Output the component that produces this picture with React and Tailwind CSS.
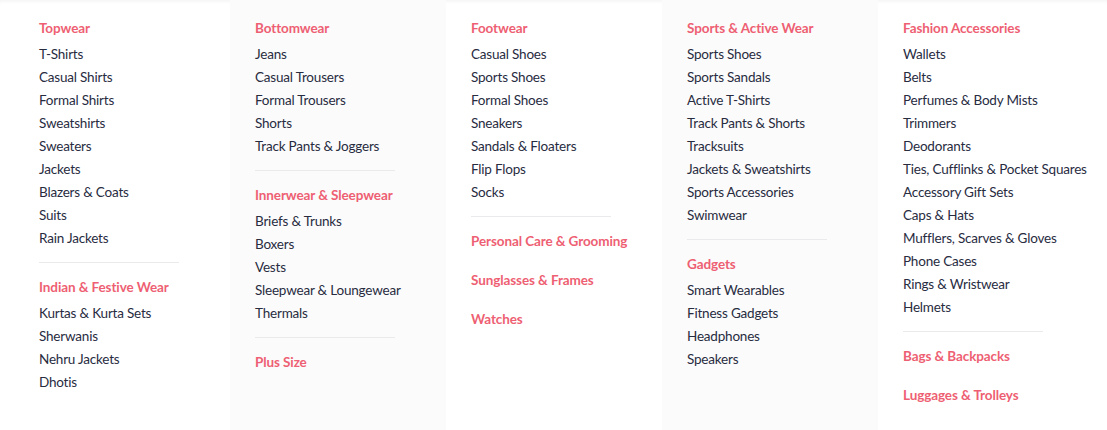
import React from 'react';

const columns = [
    [
        { title: 'Topwear', items: ['T-Shirts', 'Casual Shirts', 'Formal Shirts', 'Sweatshirts', 'Sweaters', 'Jackets', 'Blazers & Coats', 'Suits', 'Rain Jackets'] },
        { title: 'Indian & Festive Wear', items: ['Kurtas & Kurta Sets', 'Sherwanis', 'Nehru Jackets', 'Dhotis'] },
    ],
    [
        { title: 'Bottomwear', items: ['Jeans', 'Casual Trousers', 'Formal Trousers', 'Shorts', 'Track Pants & Joggers'] },
        { title: 'Innerwear & Sleepwear', items: ['Briefs & Trunks', 'Boxers', 'Vests', 'Sleepwear & Loungewear', 'Thermals'] },
        { title: 'Plus Size', items: [] },
    ],
    [
        { title: 'Footwear', items: ['Casual Shoes', 'Sports Shoes', 'Formal Shoes', 'Sneakers', 'Sandals & Floaters', 'Flip Flops', 'Socks'] },
        { title: 'Personal Care & Grooming', items: [], noDivider: true },
        { title: 'Sunglasses & Frames', items: [], noDivider: true },
        { title: 'Watches', items: [] },
    ],
    [
        { title: 'Sports & Active Wear', items: ['Sports Shoes', 'Sports Sandals', 'Active T-Shirts', 'Track Pants & Shorts', 'Tracksuits', 'Jackets & Sweatshirts', 'Sports Accessories', 'Swimwear'] },
        { title: 'Gadgets', items: ['Smart Wearables', 'Fitness Gadgets', 'Headphones', 'Speakers'] },
    ],
    [
        { title: 'Fashion Accessories', items: ['Wallets', 'Belts', 'Perfumes & Body Mists', 'Trimmers', 'Deodorants', 'Ties, Cufflinks & Pocket Squares', 'Accessory Gift Sets', 'Caps & Hats', 'Mufflers, Scarves & Gloves', 'Phone Cases', 'Rings & Wristwear', 'Helmets'] },
        { title: 'Bags & Backpacks', items: [], noDivider: true },
        { title: 'Luggages & Trolleys', items: [] },
    ],
];

const Group = ({ group, isLast }) => (
    <div>
        <a href="#" className="block h-[23px] leading-[23px] text-[13.5px] tracking-[-0.1px] font-bold text-[#ee5f73] whitespace-nowrap">
            {group.title}
        </a>
        {group.items.length > 0 && (
            <ul className="mt-[3px]">
                {group.items.map(item => (
                    <li key={item} className="h-[23px] leading-[23px] text-[13.5px] tracking-[-0.2px] text-[#282c3f] whitespace-nowrap">
                        <a href="#">{item}</a>
                    </li>
                ))}
            </ul>
        )}
        {!isLast && (
            group.noDivider
                ? <div className="h-[16px]" />
                : <div className="w-[140px] border-t border-[#eaeaec] mt-[12px] mb-[13px]" />
        )}
    </div>
);

export default function App() {
    return (
        <div
            className="h-[430px] bg-white flex pl-[14px] shadow-[inset_0_4px_4px_-3px_rgba(0,0,0,0.06)]"
            style={{ fontFamily: 'Lato, "Open Sans", sans-serif' }}
        >
            {columns.map((col, ci) => (
                <div
                    key={ci}
                    className={`w-[216px] shrink-0 px-[25px] pt-[17px] ${ci % 2 === 1 ? 'bg-[#fbfbfb]' : ''}`}
                >
                    {col.map((group, gi) => (
                        <Group key={group.title} group={group} isLast={gi === col.length - 1} />
                    ))}
                </div>
            ))}
        </div>
    );
}
